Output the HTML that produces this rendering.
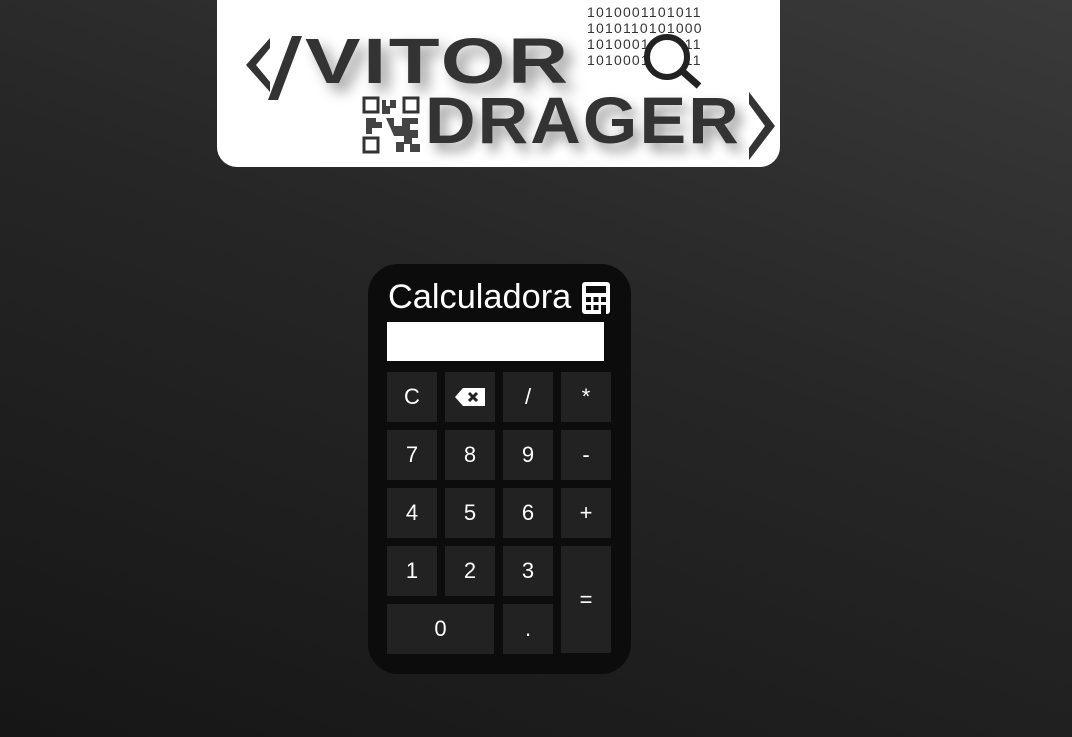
<!DOCTYPE html>
<html><head><style>
*{margin:0;padding:0;box-sizing:border-box}
body{width:1072px;height:737px;overflow:hidden;background:linear-gradient(200deg,#3a3a3a 0%,#262626 45%,#161616 100%);font-family:"Liberation Sans",sans-serif;position:relative}
.logo{position:absolute;left:217px;top:-20px;width:563px;height:187px;background:#fff;border-radius:20px;overflow:hidden;color:#333}
.logo .t{position:absolute;font-weight:bold;font-family:"Liberation Sans",sans-serif;letter-spacing:2px;text-shadow:6px 8px 12px rgba(0,0,0,.4)}
.bin{position:absolute;left:370px;top:24px;font-size:14px;line-height:16px;color:#333;letter-spacing:1.2px}
.card{position:absolute;left:368px;top:264px;width:263px;height:410px;background:#0c0c0c;border-radius:30px}
.title{position:absolute;left:20px;top:14px;color:#fff;font-size:34px;transform:scaleX(1.01);transform-origin:left}
.disp{position:absolute;left:19px;top:58px;width:217px;height:39px;background:#fff}
.b{position:absolute;width:50px;height:50px;background:#222;color:#fff;font-size:22px;display:flex;align-items:center;justify-content:center}
</style></head><body>
<div class="logo">
<svg style="position:absolute;left:25px;top:50px" width="60" height="70"><path d="M28 8 L4 35 L28 62 L28 52 L14 35 L28 18Z" fill="#333"/><path d="M60 6 L50 6 L26 70 L36 70Z" fill="#333"/></svg>
<div class="t" style="left:88px;top:44px;font-size:64px;transform:scaleX(1.3);transform-origin:left">VITOR</div>
<div class="t" style="left:208px;top:102px;font-size:66px;transform:scaleX(1.06);transform-origin:left">DRAGER</div>
<div class="bin">1010001101011<br>1010110101000<br>1010001101011<br>1010001101011</div>
<svg style="position:absolute;left:420px;top:50px" width="80" height="70"><circle cx="30" cy="27" r="20" fill="#fff" stroke="#222" stroke-width="6"/><path d="M45 41 L62 56" stroke="#222" stroke-width="7"/></svg>
<svg style="position:absolute;left:145px;top:116px" width="60" height="60"><rect x="2" y="2" width="14" height="14" fill="none" stroke="#333" stroke-width="3"/><rect x="42" y="2" width="14" height="14" fill="none" stroke="#333" stroke-width="3"/><rect x="2" y="42" width="14" height="14" fill="none" stroke="#333" stroke-width="3"/><path d="M20 4h4v6h4v-6h6v8h-6v6h-8zM4 22h10v4h6v6h-10v6h-6zM24 22h8v8h8v-8h16v6h-8v6h8v8h-6v6h8v8h-10v-8h-6v8h-8v-10h8v-6h-10z" fill="#444"/></svg>
<svg style="position:absolute;left:528px;top:108px" width="32" height="80"><path d="M4 4 L30 38 L4 72 L4 60 L20 38 L4 16Z" fill="#333"/></svg>
</div>
<div class="card">
<div class="title">Calculadora</div>
<svg style="position:absolute;left:214px;top:18px" width="28" height="32" viewBox="0 0 28 32"><rect x="0" y="0" width="28" height="32" rx="3" fill="#fff"/><rect x="4" y="4" width="20" height="7" fill="#0c0c0c"/><g fill="#0c0c0c"><rect x="4" y="15" width="5" height="5"/><rect x="11.5" y="15" width="5" height="5"/><rect x="19" y="15" width="5" height="5"/><rect x="4" y="23" width="5" height="5"/><rect x="11.5" y="23" width="5" height="5"/><rect x="19" y="23" width="5" height="13"/></g></svg>
<div class="disp"></div>
<div class="b" style="left:19px;top:108px">C</div>
<div class="b" style="left:77px;top:108px"><svg width="32" height="20" viewBox="0 0 32 20"><path d="M9 1H31V19H9L1 10Z" fill="#fff"/><path d="M15 6L23 14M23 6L15 14" stroke="#222" stroke-width="3"/></svg></div>
<div class="b" style="left:135px;top:108px">/</div>
<div class="b" style="left:193px;top:108px;align-items:flex-start;padding-top:12px">*</div>
<div class="b" style="left:19px;top:166px">7</div>
<div class="b" style="left:77px;top:166px">8</div>
<div class="b" style="left:135px;top:166px">9</div>
<div class="b" style="left:193px;top:166px">-</div>
<div class="b" style="left:19px;top:224px">4</div>
<div class="b" style="left:77px;top:224px">5</div>
<div class="b" style="left:135px;top:224px">6</div>
<div class="b" style="left:193px;top:224px">+</div>
<div class="b" style="left:19px;top:282px">1</div>
<div class="b" style="left:77px;top:282px">2</div>
<div class="b" style="left:135px;top:282px">3</div>
<div class="b" style="left:193px;top:282px;height:107px">=</div>
<div class="b" style="left:19px;top:340px;width:107px">0</div>
<div class="b" style="left:135px;top:340px">.</div>
</div>
</body></html>
